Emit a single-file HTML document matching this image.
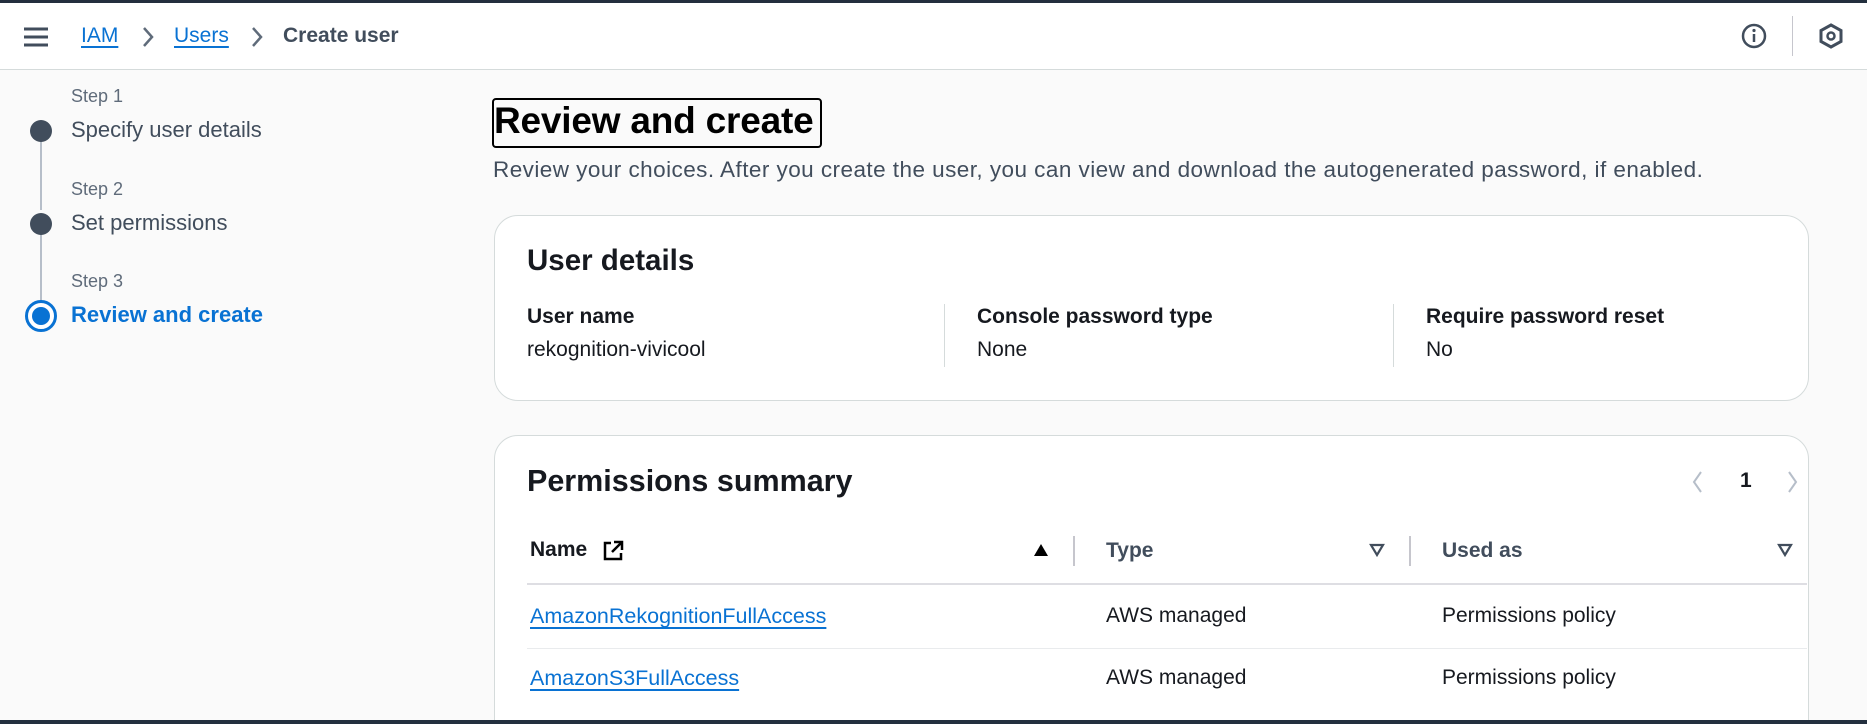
<!DOCTYPE html>
<html style="width:1867px;height:724px;overflow:hidden"><head><meta charset="utf-8"><style>
*{margin:0;padding:0;box-sizing:border-box}
body{width:1867px;height:724px;overflow:hidden;background:#fafafa;font-family:"Liberation Sans",sans-serif;color:#16191f;position:relative}
.a{position:absolute;white-space:nowrap}
.top{position:absolute;left:0;top:0;width:1867px;height:70px;background:#fff;border-top:3px solid #232f3e;border-bottom:1px solid #d5dbdb}
.link{color:#0972d3;text-decoration:underline;text-underline-offset:4px}
.card{position:absolute;background:#fff;border:1px solid #d5dbdb;border-radius:24px}
.lbl{font-weight:bold;font-size:21px}
.val{font-size:21px}
.vd{position:absolute;width:1px;background:#d5dbdb}
</style></head><body>
<div class="top"></div>
<svg class="a" style="left:24px;top:27px" width="24" height="20"><path d="M0 2H24M0 10H24M0 18H24" stroke="#414d5c" stroke-width="3"/></svg>
<div class="a link" style="left:81px;top:24px;font-size:21px">IAM</div>
<svg class="a" style="left:141px;top:26px" width="14" height="22"><path d="M3 2L11 11L3 20" stroke="#5f6b7a" stroke-width="2.5" fill="none"/></svg>
<div class="a link" style="left:174px;top:24px;font-size:21px">Users</div>
<svg class="a" style="left:250px;top:26px" width="14" height="22"><path d="M3 2L11 11L3 20" stroke="#5f6b7a" stroke-width="2.5" fill="none"/></svg>
<div class="a" style="left:283px;top:24px;font-size:21px;color:#414d5c;font-weight:bold">Create user</div>
<svg class="a" style="left:1741px;top:23px" width="26" height="26"><circle cx="13" cy="13" r="11" stroke="#414d5c" stroke-width="2.5" fill="none"/><path d="M13 11V19" stroke="#414d5c" stroke-width="2.5"/><circle cx="13" cy="7.5" r="1.6" fill="#414d5c"/></svg>
<div class="vd" style="left:1792px;top:16px;height:40px;background:#c6c6cd"></div>
<svg class="a" style="left:1818px;top:23px" width="26" height="26"><path d="M13 2L23 7.5V18.5L13 24L3 18.5V7.5Z" stroke="#414d5c" stroke-width="3" fill="none"/><circle cx="13" cy="13" r="3.5" stroke="#414d5c" stroke-width="2.5" fill="none"/></svg>

<div class="a" style="left:71px;top:86px;font-size:18px;color:#5f6b7a">Step 1</div>
<div class="a" style="left:71px;top:117px;font-size:22px;color:#414d5c">Specify user details</div>
<div class="a" style="left:71px;top:179px;font-size:18px;color:#5f6b7a">Step 2</div>
<div class="a" style="left:71px;top:210px;font-size:22px;color:#414d5c">Set permissions</div>
<div class="a" style="left:71px;top:271px;font-size:18px;color:#5f6b7a">Step 3</div>
<div class="a" style="left:71px;top:302px;font-size:22px;color:#0972d3;font-weight:bold">Review and create</div>
<div class="vd" style="left:40px;top:140px;height:70px;width:2px;background:#b6bec9"></div>
<div class="vd" style="left:40px;top:233px;height:70px;width:2px;background:#b6bec9"></div>
<div class="a" style="left:30px;top:120px;width:22px;height:22px;border-radius:50%;background:#414d5c"></div>
<div class="a" style="left:30px;top:213px;width:22px;height:22px;border-radius:50%;background:#414d5c"></div>
<div class="a" style="left:25px;top:300px;width:32px;height:32px;border-radius:50%;border:3px solid #0972d3;background:#fff"></div>
<div class="a" style="left:32px;top:307px;width:18px;height:18px;border-radius:50%;background:#0972d3"></div>

<div class="a" style="left:492px;top:98px;width:330px;height:50px;border:2px solid #000;border-radius:4px"></div>
<div class="a" style="left:494px;top:100px;font-size:37px;font-weight:bold;color:#000;letter-spacing:-0.2px">Review and create</div>
<div class="a" style="left:493px;top:157px;font-size:22.5px;color:#414d5c;letter-spacing:0.45px">Review your choices. After you create the user, you can view and download the autogenerated password, if enabled.</div>

<div class="card" style="left:494px;top:215px;width:1315px;height:186px"></div>
<div class="a" style="left:527px;top:244px;font-size:29.5px;font-weight:bold">User details</div>
<div class="a lbl" style="left:527px;top:305px">User name</div>
<div class="a val" style="left:527px;top:338px">rekognition-vivicool</div>
<div class="vd" style="left:944px;top:304px;height:63px"></div>
<div class="a lbl" style="left:977px;top:305px">Console password type</div>
<div class="a val" style="left:977px;top:338px">None</div>
<div class="vd" style="left:1393px;top:304px;height:63px"></div>
<div class="a lbl" style="left:1426px;top:305px">Require password reset</div>
<div class="a val" style="left:1426px;top:338px">No</div>

<div class="card" style="left:494px;top:435px;width:1315px;height:320px"></div>
<div class="a" style="left:527px;top:464px;font-size:30.5px;font-weight:bold">Permissions summary</div>
<svg class="a" style="left:1690px;top:470px" width="16" height="24"><path d="M11 2L4 12L11 22" stroke="#b6bec9" stroke-width="2" fill="none"/></svg>
<div class="a" style="left:1740px;top:469px;font-size:21px;font-weight:bold">1</div>
<svg class="a" style="left:1784px;top:470px" width="16" height="24"><path d="M5 2L12 12L5 22" stroke="#b6bec9" stroke-width="2" fill="none"/></svg>

<div class="a lbl" style="left:530px;top:538px">Name</div>
<svg class="a" style="left:602px;top:540px" width="22" height="22"><path d="M9 3H3V19H19V13" stroke="#000" stroke-width="2.5" fill="none"/><path d="M12 2H20V10M20 2L10 12" stroke="#000" stroke-width="2.5" fill="none"/></svg>
<svg class="a" style="left:1033px;top:543px" width="16" height="14"><path d="M8 1L15 13H1Z" fill="#000"/></svg>
<div class="vd" style="left:1073px;top:536px;height:30px;width:2px;background:#c6c6cd"></div>
<div class="a" style="left:1106px;top:539px;font-size:21px;color:#414d5c;font-weight:bold">Type</div>
<svg class="a" style="left:1369px;top:543px" width="16" height="14"><path d="M2 2H14L8 12Z" stroke="#414d5c" stroke-width="2.2" fill="none"/></svg>
<div class="vd" style="left:1409px;top:536px;height:30px;width:2px;background:#c6c6cd"></div>
<div class="a" style="left:1442px;top:539px;font-size:21px;color:#414d5c;font-weight:bold">Used as</div>
<svg class="a" style="left:1777px;top:543px" width="16" height="14"><path d="M2 2H14L8 12Z" stroke="#414d5c" stroke-width="2.2" fill="none"/></svg>
<div class="a" style="left:527px;top:583px;width:1280px;height:2px;background:#dedee3"></div>

<div class="a link" style="left:530px;top:604px;font-size:21.5px">AmazonRekognitionFullAccess</div>
<div class="a val" style="left:1106px;top:604px">AWS managed</div>
<div class="a val" style="left:1442px;top:604px">Permissions policy</div>
<div class="a" style="left:527px;top:648px;width:1280px;height:1px;background:#e9ebed"></div>
<div class="a link" style="left:530px;top:666px;font-size:21.5px">AmazonS3FullAccess</div>
<div class="a val" style="left:1106px;top:666px">AWS managed</div>
<div class="a val" style="left:1442px;top:666px">Permissions policy</div>
<div class="a" style="left:0;top:720px;width:1867px;height:4px;background:#232f3e"></div>
</body></html>
